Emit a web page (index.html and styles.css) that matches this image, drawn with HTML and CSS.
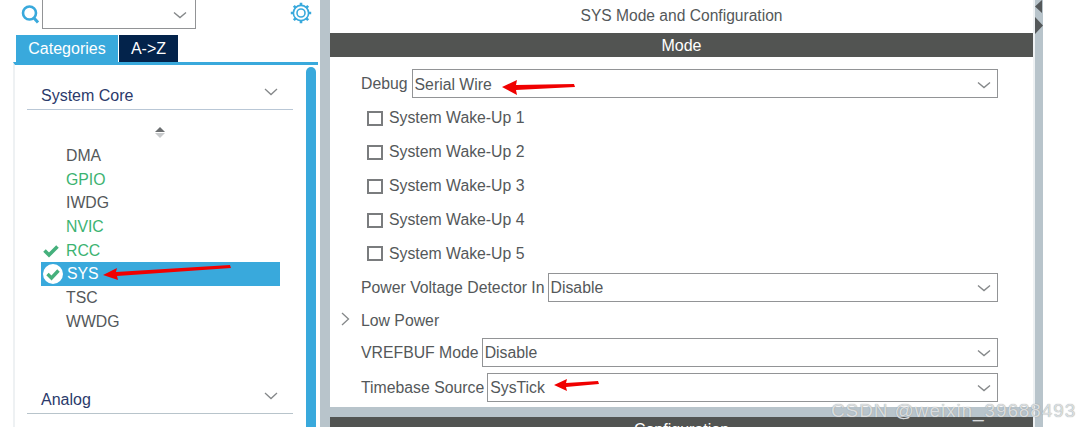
FILE: index.html
```html
<!DOCTYPE html>
<html lang="en">
<head>
    <meta charset="UTF-8">
    <meta name="viewport" content="width=device-width, initial-scale=1.0">
    <title>SYS Mode and Configuration</title>
    <link rel="stylesheet" href="styles.css">
</head>
<body>
    <div class="app">
        <aside class="sidebar">
            <div class="search-row">
                <svg class="search-icon" width="19" height="20" viewBox="0 0 19 20">
                    <circle cx="8.500" cy="9" r="6.500" fill="none" stroke="#39a9dc" stroke-width="2.600"/>
                    <path d="M13 14l4 4.500" stroke="#39a9dc" stroke-width="3" fill="none"/>
                </svg>
                <div class="search-box">
                    <svg class="chevron" width="14" height="8" viewBox="0 0 14 8"><path d="M1 1.500l6 5 6-5" fill="none" stroke="#85888a" stroke-width="1.400"/></svg>
                </div>
                <svg class="gear-icon" width="22" height="22" viewBox="0 0 22 22">
                    <circle cx="11" cy="11" r="4" fill="none" stroke="#39a9dc" stroke-width="1.600"/>
                    <circle cx="11" cy="11" r="7.600" fill="none" stroke="#39a9dc" stroke-width="1.600"/>
                    <path d="M11 .8v3M11 18.200v3M.8 11h3M18.200 11h3M3.800 3.800l2.100 2.100M16.100 16.100l2.100 2.100M3.800 18.200l2.100-2.100M16.100 5.900l2.100-2.100" stroke="#39a9dc" stroke-width="2.600"/>
                </svg>
            </div>
            <div class="tabs">
                <div class="tab tab-active">Categories</div>
                <div class="tab tab-dark">A-&gt;Z</div>
            </div>
            <div class="tree">
                <div class="tree-body">
                    <div class="group-head">
                        <span>System Core</span>
                        <svg class="chevron" width="14" height="8" viewBox="0 0 14 8"><path d="M1 1l6 5.500L13 1" fill="none" stroke="#85888a" stroke-width="1.300"/></svg>
                    </div>
                    <div class="sort-icon"><span class="sort-up"></span><span class="sort-down"></span></div>
                    <ul class="peripherals">
                        <li>DMA</li>
                        <li class="is-ok">GPIO</li>
                        <li>IWDG</li>
                        <li class="is-ok">NVIC</li>
                        <li class="is-ok">
                            <svg class="check" width="16" height="14" viewBox="0 0 16 14"><path d="M1.500 6.500l4.500 4.500L14.500 2.500" fill="none" stroke="#45b07c" stroke-width="3.600"/></svg>
                            RCC
                        </li>
                        <li class="is-selected">
                            <svg class="check-round" width="20" height="20" viewBox="0 0 20 20"><circle cx="10" cy="10" r="10" fill="#fff"/><path d="M4.500 10l4 4L15.500 6.500" fill="none" stroke="#45b07c" stroke-width="3.400"/></svg>
                            SYS
                        </li>
                        <li>TSC</li>
                        <li>WWDG</li>
                    </ul>
                    <div class="group-head group-analog">
                        <span>Analog</span>
                        <svg class="chevron" width="14" height="8" viewBox="0 0 14 8"><path d="M1 1l6 5.500L13 1" fill="none" stroke="#85888a" stroke-width="1.300"/></svg>
                    </div>
                </div>
                <div class="scrollbar"></div>
            </div>
        </aside>

        <div class="gutter"></div>

        <main class="main">
            <h1 class="main-title">SYS Mode and Configuration</h1>
            <h2 class="band">Mode</h2>
            <div class="form">
                <div class="field field-debug">
                    <label>Debug</label>
                    <div class="select">Serial Wire<svg class="chevron" width="14" height="8" viewBox="0 0 14 8"><path d="M1 1.500l6 5 6-5" fill="none" stroke="#85888a" stroke-width="1.400"/></svg></div>
                </div>
                <div class="check-row"><span class="checkbox"></span>System Wake-Up 1</div>
                <div class="check-row"><span class="checkbox"></span>System Wake-Up 2</div>
                <div class="check-row"><span class="checkbox"></span>System Wake-Up 3</div>
                <div class="check-row"><span class="checkbox"></span>System Wake-Up 4</div>
                <div class="check-row check-row-last"><span class="checkbox"></span>System Wake-Up 5</div>
                <div class="field field-power">
                    <label>Power Voltage Detector In</label>
                    <div class="select">Disable<svg class="chevron" width="14" height="8" viewBox="0 0 14 8"><path d="M1 1.500l6 5 6-5" fill="none" stroke="#85888a" stroke-width="1.400"/></svg></div>
                </div>
                <div class="expander">
                    <svg class="expander-icon" width="9" height="14" viewBox="0 0 9 14"><path d="M1 1l6.500 6L1 13" fill="none" stroke="#85888a" stroke-width="1.300"/></svg>
                    Low Power
                </div>
                <div class="field">
                    <label>VREFBUF Mode</label>
                    <div class="select">Disable<svg class="chevron" width="14" height="8" viewBox="0 0 14 8"><path d="M1 1.500l6 5 6-5" fill="none" stroke="#85888a" stroke-width="1.400"/></svg></div>
                </div>
                <div class="field field-timebase">
                    <label>Timebase Source</label>
                    <div class="select">SysTick<svg class="chevron" width="14" height="8" viewBox="0 0 14 8"><path d="M1 1.500l6 5 6-5" fill="none" stroke="#85888a" stroke-width="1.400"/></svg></div>
                </div>
            </div>
            <div class="main-split"></div>
            <h2 class="band">Configuration</h2>
        </main>

        <div class="side-rail">
            <svg class="rail-arrows" width="8" height="36" viewBox="0 0 8 36"><path d="M7 0v13L0 6.500zM0 17l8 8.500-8 8.500z" fill="#54585a"/></svg>
        </div>
    </div>

    <!-- screenshot annotations -->
    <svg class="annotations" width="1081" height="427" viewBox="0 0 1081 427">
        <g fill="#f00000">
            <path d="M103 275l14-7-1 4 114-7 1 3-114 8 1 4z"/>
            <path d="M502 87l15-7-1 5 58-1 1 3-59 3 1 5z"/>
            <path d="M554 385l13-6-1 4 32-2 1 3-33 3 1 4z"/>
        </g>
    </svg>
    <div class="watermark">CSDN @weixin_39688493</div>
</body>
</html>
```

FILE: styles.css
```css
:root {
    --blue: #39a9dc;
    --navy: #03234b;
    --band: #525452;
    --rail: #b8c4cb;
    --text: #54585a;
    --green: #3cb371;
    --line: #929496;
}

* {
    margin: 0;
    padding: 0;
    box-sizing: border-box;
    font-family: "Liberation Sans", Arial, sans-serif;
}

body {
    background-color: #fff;
    color: var(--text);
    font-size: 15.8px;
    overflow: hidden;
}

.app {
    display: flex;
    width: 1081px;
    height: 427px;
    overflow: hidden;
}

/* left panel */
.sidebar {
    width: 320px;
    display: flex;
    flex-direction: column;
    padding-left: 13px;
}

.search-row {
    display: flex;
    align-items: flex-start;
    flex: none;
    height: 35px;
}

.search-icon {
    margin: 4px 0 0 8px;
}

.search-box {
    width: 154px;
    height: 29px;
    margin: 0 0 0 2px;
    border: 1px solid var(--line);
    border-top: 0;
    display: flex;
    align-items: center;
    justify-content: flex-end;
    padding: 2px 8px 0 0;
}

.gear-icon {
    margin: 2px 0 0 94px;
}

.tabs {
    display: flex;
    flex: none;
    gap: 1px;
    height: 27px;
    padding-left: 3px;
}

.tab {
    color: #fff;
    font-size: 16px;
    line-height: 27px;
    text-align: center;
}

.tab-active {
    width: 102px;
    background-color: var(--blue);
}

.tab-dark {
    width: 59px;
    background-color: var(--navy);
}

.tree {
    flex: 1;
    width: 305px;
    border-top: 3px solid var(--blue);
    border-left: 2px solid #eef1f3;
    display: flex;
    justify-content: space-between;
    padding-top: 2px;
}

.tree-body {
    width: 266px;
    margin-left: 12px;
}

.group-head {
    height: 43px;
    padding: 20px 14px 0;
    border-bottom: 1px solid #b9c7d6;
    display: flex;
    justify-content: space-between;
    color: #2b3a6b;
    font-size: 16px;
}

.group-head .chevron {
    margin: 1px 1px 0 0;
}

.group-analog {
    height: 38px;
    margin-top: 42px;
    padding-top: 15px;
    border-bottom-color: #b8c4cb;
}

.sort-icon {
    display: flex;
    flex-direction: column;
    align-items: center;
    gap: 1px;
    height: 34px;
    padding: 17px 0 0 0;
}

.sort-up, .sort-down {
    width: 0;
    height: 0;
    border-left: 5px solid transparent;
    border-right: 5px solid transparent;
}

.sort-up {
    border-bottom: 5px solid #6b6e70;
}

.sort-down {
    border-top: 5px solid #c8cacc;
}

.peripherals {
    list-style: none;
    margin-left: 14px;
    width: 239px;
}

.peripherals li {
    height: 23.7px;
    line-height: 23.7px;
    padding-left: 25px;
    position: relative;
}

.is-ok {
    color: var(--green);
}

.check {
    position: absolute;
    left: 2px;
    top: 5px;
}

.is-selected {
    background-color: var(--blue);
    color: #fff;
}

.peripherals .is-selected {
    padding-left: 26px;
}

.check-round {
    position: absolute;
    left: 2px;
    top: 2px;
}

.scrollbar {
    width: 10px;
    margin-right: 2px;
    background-color: var(--blue);
    border-radius: 5px 5px 0 0;
}

.gutter {
    width: 10px;
    background-color: var(--rail);
}

/* main panel */
.main {
    width: 703px;
    display: flex;
    flex-direction: column;
    overflow: hidden;
}

.main-title {
    flex: none;
    height: 33px;
    font-size: 15.6px;
    font-weight: 400;
    line-height: 31px;
    text-align: center;
}

.band {
    flex: none;
    height: 24px;
    background-color: var(--band);
    color: #fff;
    font-size: 16px;
    font-weight: 400;
    line-height: 25px;
    text-align: center;
}

.form {
    flex: none;
    height: 350px;
    padding: 12px 35px 0 31px;
}

.field {
    display: flex;
    align-items: center;
    gap: 3px;
    height: 29px;
}

.field-debug {
    gap: 4px;
    margin-bottom: 3px;
}

.field-debug .select {
    padding-top: 2px;
}

.field-power {
    margin-top: 3px;
}

.field-timebase {
    margin-top: 6px;
}

.select {
    flex: 1;
    height: 100%;
    border: 1px solid var(--line);
    padding: 0 6px 0 2px;
    display: flex;
    align-items: center;
    justify-content: space-between;
}

.check-row {
    display: flex;
    align-items: center;
    gap: 6px;
    height: 34px;
    padding-left: 6px;
}

.check-row-last {
    height: 33px;
}

.checkbox {
    width: 16px;
    height: 15px;
    border: 2px solid #7a7c7e;
    background-color: #fff;
}

.expander {
    height: 36px;
    line-height: 38px;
    position: relative;
}

.expander-icon {
    position: absolute;
    left: -20px;
    top: 10px;
}

.main-split {
    flex: none;
    height: 10px;
    background-color: var(--rail);
}

.side-rail {
    width: 10px;
    border-left: 2px solid #eef1f3;
    background-color: var(--rail);
}

.rail-arrows {
    display: block;
}

.annotations {
    position: absolute;
    left: 0;
    top: 0;
    pointer-events: none;
}

.watermark {
    position: absolute;
    left: 831px;
    top: 400px;
    color: rgba(228, 231, 233, 0.9);
    font-size: 19px;
    letter-spacing: 0.9px;
    text-shadow: 0 0 1px #868a8c;
    white-space: nowrap;
}
```
